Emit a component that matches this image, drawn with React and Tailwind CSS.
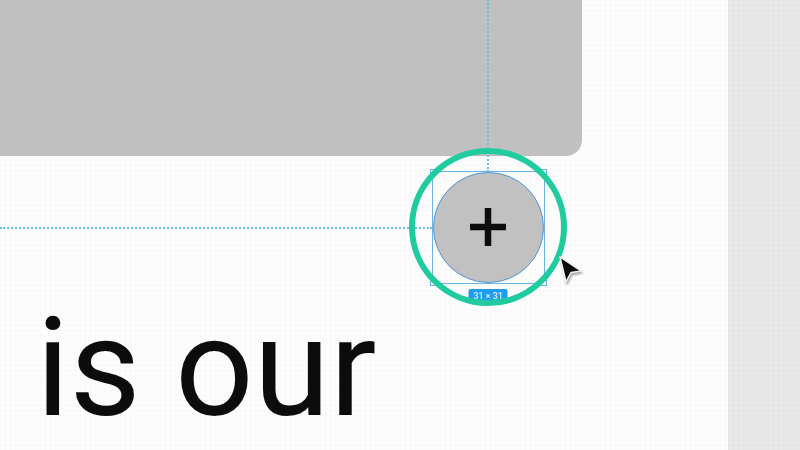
import React from 'react';

// Faint canvas grid that sits over the whole recording
const gridClass =
  'bg-[linear-gradient(to_right,rgba(0,0,0,0.012)_1px,transparent_1px),linear-gradient(to_bottom,rgba(0,0,0,0.012)_1px,transparent_1px)] bg-[size:5px_5px]';

const Handle = ({ className }) => (
  <span className={`absolute w-[6px] h-[6px] bg-white border border-[#6cb2e4] ${className}`} />
);

// The selected + button, with its frame, size label and highlight ring
const SelectedButton = () => (
  <div className="relative w-[158px] h-[158px] rounded-full flex items-center justify-center">
    <div className="relative w-[113px] h-[113px] border border-[#6cb2e4]">
      <Handle className="-left-[3px] -top-[3px]" />
      <Handle className="-right-[3px] -top-[3px]" />
      <Handle className="-left-[3px] -bottom-[3px]" />
      <Handle className="-right-[3px] -bottom-[3px]" />
      <div className="w-full h-full rounded-full bg-[#c1c1c1] border border-[#4f94d8] flex items-center justify-center">
        <svg width="36" height="38" viewBox="0 0 36 38">
          <path d="M18 0v38M0 19h36" stroke="#0c0c0c" strokeWidth="6.5" />
        </svg>
      </div>
      <div className="absolute left-1/2 -translate-x-1/2 -bottom-[21px] w-[39px] h-[15px] rounded-[2px] bg-[#1f9cf5] text-white text-[9px] leading-[14px] text-center">
        31 × 31
      </div>
    </div>
    <div className="absolute inset-0 rounded-full border-[6px] border-[#1fcb9f]" />
  </div>
);

const App = () => {
  return (
    <div className="relative flex w-[800px] h-[450px] overflow-hidden bg-[#fdfdfd] font-['Roboto',sans-serif]">
      <main className={`flex flex-col justify-between w-[728px] pb-[7px] ${gridClass}`}>
        <div className={`w-[582px] h-[156px] shrink-0 bg-[#c1c1c1] rounded-br-[16px] ${gridClass}`} />
        <p className="pl-[36px] text-[138px] font-[430] leading-[150px] text-[#0c0c0c] whitespace-nowrap">
          is our
        </p>
      </main>
      <aside className={`flex-1 bg-[#e8e8e8] ${gridClass}`} />

      {/* guides */}
      <div className="absolute left-[487px] top-0 h-[172px] border-l-2 border-dotted border-[#6cc0e4]" />
      <div className="absolute left-0 top-[227px] w-[432px] border-t-2 border-dotted border-[#6cc0e4]" />

      <div className="absolute left-[409px] top-[148px]">
        <SelectedButton />
      </div>

      {/* cursor */}
      <svg className="absolute left-[554px] top-[252px] drop-shadow-[1px_2px_1px_rgba(0,0,0,0.35)]" width="36" height="38" viewBox="0 0 36 38">
        <path d="M6 5 L27 19 L17 20.5 L12 30 Z" fill="#0a0a0a" stroke="#f2f2f2" strokeWidth="1.5" strokeLinejoin="round" />
      </svg>
    </div>
  );
};

export default App;
